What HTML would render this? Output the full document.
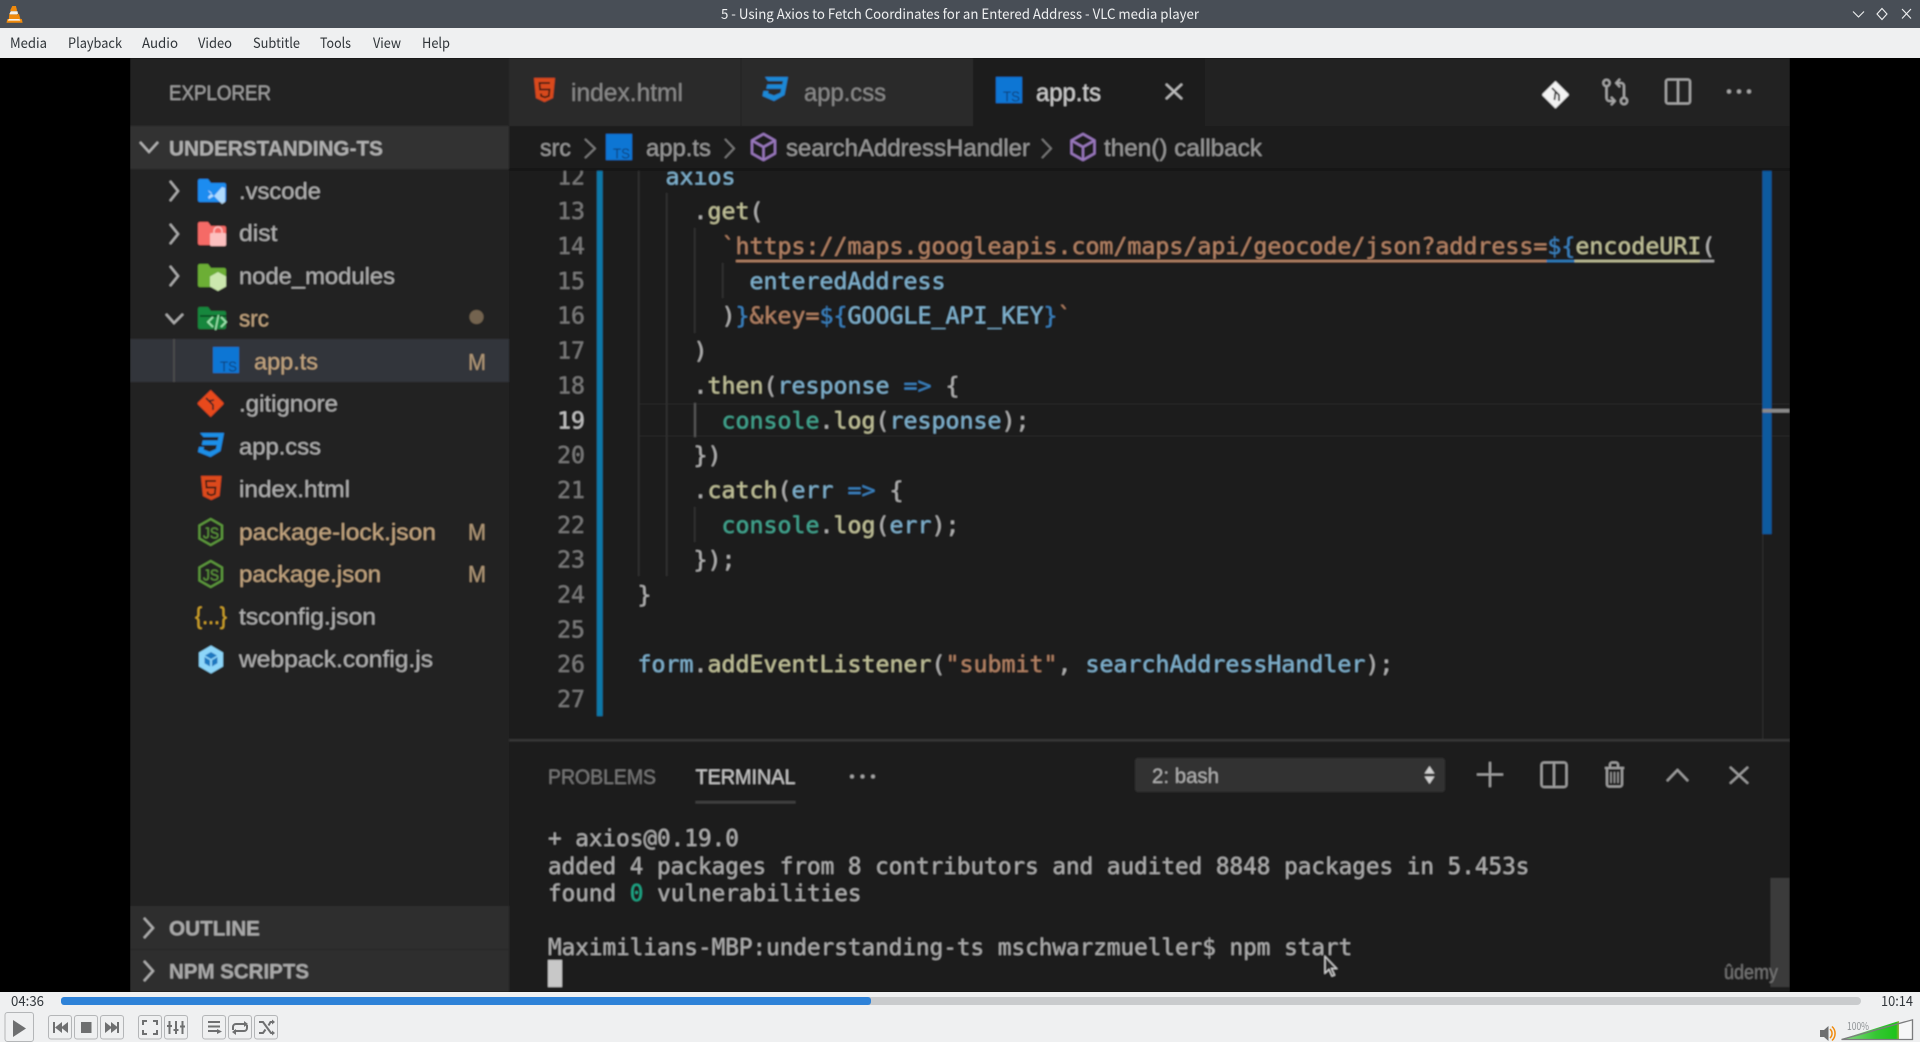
<!DOCTYPE html>
<html lang="en"><head><meta charset="utf-8"><title>VLC media player</title>
<style>
html,body{margin:0;padding:0;background:#000;width:1920px;height:1042px;overflow:hidden}
svg{display:block}
.s{font-family:"Liberation Sans",sans-serif}
.m{font-family:"DejaVu Sans Mono","Liberation Mono",monospace;font-size:23.25px;white-space:pre}
.t{font-family:"DejaVu Sans Mono","Liberation Mono",monospace;font-size:22.65px;fill:#afafaf;white-space:pre}
.n{font-family:"Noto Sans CJK JP","Liberation Sans",sans-serif}
.tree{font-size:23px;fill:#b0b0b0}
.mod{fill:#c4a680}
.ln{font-family:"DejaVu Sans Mono","Liberation Mono",monospace;font-size:23.2px;fill:#7a7a7a;text-anchor:end}
.v{fill:#80b2cf}.f{fill:#c2c29a}.q{fill:#b58365}.b{fill:#3a82bf}.c{fill:#42a690}.p{fill:#b2b2b2}
.btn{fill:#eff0f1;stroke:#b4b6b8;stroke-width:1}
.ic{fill:#6e6f70}
</style></head><body>
<svg width="1920" height="1042" viewBox="0 0 1920 1042" xmlns="http://www.w3.org/2000/svg">
<defs>
<filter id="bl" x="0" y="0" width="100%" height="100%"><feGaussianBlur stdDeviation="0.7"/></filter>
<linearGradient id="vol" x1="0" y1="0" x2="1" y2="0"><stop offset="0" stop-color="#8ed88a"/><stop offset=".6" stop-color="#35c733"/><stop offset=".95" stop-color="#1fc41a"/><stop offset="1" stop-color="#9fb040"/></linearGradient>
<clipPath id="volc"><path d="M1842 1039L1899 1021V1039Z"/></clipPath>
<g id="tsi"><rect x="0" y="0" width="26" height="26" fill="#0b76d4"/><text x="7" y="24.500" font-family="Liberation Sans,sans-serif" font-size="15" fill="#0a3f78" textLength="17" lengthAdjust="spacingAndGlyphs">TS</text></g>
<g id="cube" fill="none" stroke="#9a78bd" stroke-width="2.200" stroke-linejoin="round"><path d="M12.500 1L24 7.500V20.500L12.500 27L1 20.500V7.500Z"/><path d="M1 7.500L12.500 14L24 7.500M12.500 14V27"/></g>
</defs>

<rect width="1920" height="1042" fill="#000"/>

<!-- video frame -->
<g filter="url(#bl)">
<rect x="130" y="58" width="1660" height="934" fill="#1b1b1b"/>
<!-- sidebar -->
<rect x="130" y="58" width="379" height="934" fill="#232323"/>
<rect x="130" y="126" width="379" height="43" fill="#303030"/>
<rect x="130" y="339" width="379" height="43" fill="#33343a"/>
<rect x="173" y="339" width="2" height="43" fill="#4c4c4c"/>
<rect x="130" y="906" width="379" height="86" fill="#2f2f2f"/>
<rect x="130" y="949" width="379" height="1" fill="#272727"/>

<text class="s" x="169" y="100" font-size="21" fill="#a0a0a0" textLength="102" lengthAdjust="spacingAndGlyphs">EXPLORER</text>
<path d="M140 142L149 152L158 142" fill="none" stroke="#b5b5b5" stroke-width="2.200"/>
<text class="s" x="169" y="155.500" font-size="21.500" font-weight="bold" fill="#b0b0b0" textLength="214" lengthAdjust="spacingAndGlyphs">UNDERSTANDING-TS</text>

<g fill="none" stroke="#b0b0b0" stroke-width="2.200">
<path d="M170 181L178 191L170 201"/><path d="M170 224L178 234L170 244"/><path d="M170 266L178 276L170 286"/><path d="M166 314L174 323L183 314"/>
</g>
<!-- folder icons -->
<path d="M198 181a2 2 0 0 1 2-2h8l3 4h13a2 2 0 0 1 2 2v15a2 2 0 0 1-2 2h-24a2 2 0 0 1-2-2z" fill="#1a8cf0"/>
<path d="M209 192l5 4 8-9 3 1v14l-3 2-8-8-5 3-1-2 4-4-4-3z" fill="#bfe2ff" opacity=".9"/>
<path d="M198 224a2 2 0 0 1 2-2h8l3 4h13a2 2 0 0 1 2 2v15a2 2 0 0 1-2 2h-24a2 2 0 0 1-2-2z" fill="#f56a66"/>
<rect x="210" y="233" width="16" height="13" rx="1.500" fill="#fcc0bf"/><path d="M214 233v-2a4 4 0 0 1 8 0v2" fill="none" stroke="#fcc0bf" stroke-width="1.600"/>
<path d="M198 266a2 2 0 0 1 2-2h8l3 4h13a2 2 0 0 1 2 2v15a2 2 0 0 1-2 2h-24a2 2 0 0 1-2-2z" fill="#6cae34"/>
<path d="M218 272l8 4.500v10l-8 4.500-8-4.500v-10z" fill="#cbe7ae"/>
<path d="M198 309a2 2 0 0 1 2-2h8l3 4h13a2 2 0 0 1 2 2v14a2 2 0 0 1-2 2h-24a2 2 0 0 1-2-2z" fill="#15873c"/>
<path d="M200 316h26" stroke="#0c4f24" stroke-width="2"/>
<path d="M213 317l-5 5 5 5M221 317l5 5-5 5" fill="none" stroke="#9fe6b0" stroke-width="1.800"/><path d="M218.500 315l-3 15" stroke="#9fe6b0" stroke-width="1.500"/>

<text class="s tree" x="239" y="199" textLength="82" lengthAdjust="spacingAndGlyphs">.vscode</text>
<text class="s tree" x="239" y="241" textLength="38.500" lengthAdjust="spacingAndGlyphs">dist</text>
<text class="s tree" x="239" y="284" textLength="156" lengthAdjust="spacingAndGlyphs">node_modules</text>
<text class="s tree mod" x="239" y="326.500" textLength="30" lengthAdjust="spacingAndGlyphs">src</text>
<circle cx="476.500" cy="317" r="7" fill="#73644f"/>
<use href="#tsi" x="213" y="347"/>
<text class="s tree mod" x="254" y="369.500" textLength="64" lengthAdjust="spacingAndGlyphs">app.ts</text>
<text class="s tree" x="468" y="370" style="fill:#b39a78" textLength="18" lengthAdjust="spacingAndGlyphs">M</text>

<!-- gitignore -->
<path d="M210.700 390l12.500 12.500a1.500 1.500 0 0 1 0 2L210.700 417 198 404.500a1.500 1.500 0 0 1 0-2z" fill="#e8491c"/>
<path d="M206 398l7 7v5M209 401l5-1v0" fill="none" stroke="#232323" stroke-width="1.600"/>
<text class="s tree" x="239" y="411.500" textLength="99" lengthAdjust="spacingAndGlyphs">.gitignore</text>
<!-- css -->
<path d="M200 433h24l-3.500 18-10 6-12.500-5 1-5h5l-.5 2.500 6 2.200 6.500-2.700.8-4h-15l1-4.500h15l.7-3.500h-15z" fill="#1e8fe8"/>
<text class="s tree" x="239" y="454.500" textLength="82" lengthAdjust="spacingAndGlyphs">app.css</text>
<!-- html -->
<path d="M201 476h20.500l-2 20-8.200 4-8.300-4z" fill="#dd4a1c"/><path d="M216 481h-10l.5 6.500h9l-.7 6.500-3.500 1.200-3.500-1.200-.2-2.500" fill="none" stroke="#2a1a14" stroke-width="1.700"/>
<text class="s tree" x="239" y="497" textLength="111" lengthAdjust="spacingAndGlyphs">index.html</text>
<!-- js hex -->
<g fill="none" stroke="#5f9c3c" stroke-width="2"><path d="M210.700 519l11.300 6.500v13l-11.300 6.500-11.300-6.500v-13z"/><path d="M210.700 561l11.300 6.500v13l-11.300 6.500-11.300-6.500v-13z"/></g>
<text x="203" y="538.500" class="s" font-size="16" fill="#5f9c3c" textLength="16" lengthAdjust="spacingAndGlyphs">JS</text>
<text x="203" y="580.500" class="s" font-size="16" fill="#5f9c3c" textLength="16" lengthAdjust="spacingAndGlyphs">JS</text>
<text class="s tree mod" x="239" y="540" textLength="197" lengthAdjust="spacingAndGlyphs">package-lock.json</text>
<text class="s tree" x="468" y="540" style="fill:#b39a78" textLength="18" lengthAdjust="spacingAndGlyphs">M</text>
<text class="s tree mod" x="239" y="582" textLength="142" lengthAdjust="spacingAndGlyphs">package.json</text>
<text class="s tree" x="468" y="582" style="fill:#b39a78" textLength="18" lengthAdjust="spacingAndGlyphs">M</text>
<!-- tsconfig -->
<text class="s" x="195" y="624" font-size="24" fill="#d6a829" textLength="32" lengthAdjust="spacingAndGlyphs">{...}</text>
<text class="s tree" x="239" y="624.500" textLength="137" lengthAdjust="spacingAndGlyphs">tsconfig.json</text>
<!-- webpack -->
<path d="M211 645.500l12 7v14l-12 7-12-7v-14z" fill="#8dd6f9"/>
<path d="M211 652l6 3.500-6 3.500-6-3.500zM204.500 657l5.500 3.200v6.300l-5.500-3.200zM217.500 657l-5.500 3.200v6.300l5.500-3.200z" fill="#1c78c0"/>
<text class="s tree" x="239" y="667" textLength="194" lengthAdjust="spacingAndGlyphs">webpack.config.js</text>

<path d="M144 918L153 928L144 938M144 961L153 971L144 981" fill="none" stroke="#b0b0b0" stroke-width="2.200"/>
<text class="s" x="169" y="935.500" font-size="21.500" font-weight="bold" fill="#aaa" textLength="91" lengthAdjust="spacingAndGlyphs">OUTLINE</text>
<text class="s" x="169" y="978.500" font-size="21.500" font-weight="bold" fill="#aaa" textLength="140" lengthAdjust="spacingAndGlyphs">NPM SCRIPTS</text>

<!-- editor -->
<rect x="509" y="58" width="1281" height="68" fill="#232323"/>
<rect x="509" y="126" width="1281" height="43" fill="#1c1c1c"/>
<rect x="509" y="169" width="1281" height="571" fill="#1b1b1b"/>
<!-- line highlight -->
<rect x="638" y="403" width="1152" height="2" fill="#242424"/><rect x="638" y="435" width="1152" height="2" fill="#242424"/>
<!-- gutter -->
<rect x="597" y="169" width="5.500" height="547" fill="#0a78a8"/>
<!-- guides -->
<g fill="#333">
<rect x="638" y="169" width="1.500" height="407"/><rect x="666" y="193" width="1.500" height="383"/>
<rect x="694" y="228" width="1.500" height="105"/><rect x="722" y="263" width="1.500" height="35"/>
<rect x="694" y="507" width="1.500" height="35"/>
</g>
<rect x="694" y="403" width="2" height="34" fill="#555"/>

<g class="ln">
<text class="ln" x="585" y="184.300">12</text><text class="ln" x="585" y="219.200">13</text><text class="ln" x="585" y="254">14</text><text class="ln" x="585" y="288.900">15</text><text class="ln" x="585" y="323.700">16</text><text class="ln" x="585" y="358.600">17</text><text class="ln" x="585" y="393.400">18</text><text class="ln" x="585" y="428.300" style="fill:#c2c2c2">19</text><text class="ln" x="585" y="463.100">20</text><text class="ln" x="585" y="498">21</text><text class="ln" x="585" y="532.800">22</text><text class="ln" x="585" y="567.700">23</text><text class="ln" x="585" y="602.500">24</text><text class="ln" x="585" y="637.400">25</text><text class="ln" x="585" y="672.200">26</text><text class="ln" x="585" y="707.100">27</text>
</g>

<text class="m v" x="665.500" y="184.300">axios</text>
<text class="m" x="693.500" y="219.200"><tspan class="p">.</tspan><tspan class="f">get</tspan><tspan class="p">(</tspan></text>
<text class="m" x="721.500" y="254"><tspan class="q">`https://maps.googleapis.com/maps/api/geocode/json?address=</tspan><tspan class="b">${</tspan><tspan class="f">encodeURI</tspan><tspan class="p">(</tspan></text>
<rect x="736" y="260" width="810.500" height="2.200" fill="#b58365"/><rect x="1546.500" y="260" width="28" height="2.200" fill="#2f7fc0"/><rect x="1574.500" y="260" width="125.500" height="2.200" fill="#c2c29a"/><rect x="1700" y="260" width="14" height="2.200" fill="#aaa"/>
<text class="m v" x="749.500" y="288.900">enteredAddress</text>
<text class="m" x="721.500" y="323.700"><tspan class="p">)</tspan><tspan class="b">}</tspan><tspan class="q">&amp;key=</tspan><tspan class="b">${</tspan><tspan class="v">GOOGLE_API_KEY</tspan><tspan class="b">}</tspan><tspan class="q">`</tspan></text>
<text class="m p" x="693.500" y="358.600">)</text>
<text class="m" x="693.500" y="393.400"><tspan class="p">.</tspan><tspan class="f">then</tspan><tspan class="p">(</tspan><tspan class="v">response</tspan> <tspan class="b">=&gt;</tspan> <tspan class="p">{</tspan></text>
<text class="m" x="721.500" y="428.300"><tspan class="c">console</tspan><tspan class="p">.</tspan><tspan class="f">log</tspan><tspan class="p">(</tspan><tspan class="v">response</tspan><tspan class="p">);</tspan></text>
<text class="m p" x="693.500" y="463.100">})</text>
<text class="m" x="693.500" y="498"><tspan class="p">.</tspan><tspan class="f">catch</tspan><tspan class="p">(</tspan><tspan class="v">err</tspan> <tspan class="b">=&gt;</tspan> <tspan class="p">{</tspan></text>
<text class="m" x="721.500" y="532.800"><tspan class="c">console</tspan><tspan class="p">.</tspan><tspan class="f">log</tspan><tspan class="p">(</tspan><tspan class="v">err</tspan><tspan class="p">);</tspan></text>
<text class="m p" x="693.500" y="567.700">});</text>
<text class="m p" x="637.500" y="602.500">}</text>
<text class="m" x="637.500" y="672.200"><tspan class="v">form</tspan><tspan class="p">.</tspan><tspan class="f">addEventListener</tspan><tspan class="p">(</tspan><tspan class="q">"submit"</tspan><tspan class="p">, </tspan><tspan class="v">searchAddressHandler</tspan><tspan class="p">);</tspan></text>

<!-- overview ruler -->
<rect x="1762" y="169" width="1.500" height="571" fill="#292929"/>
<rect x="1762.500" y="169" width="9" height="365" fill="#0a5a9e"/>
<rect x="1762.500" y="409" width="27" height="3.500" fill="#8a8a8a"/>

<!-- tabs (drawn over code) -->
<rect x="509" y="58" width="232" height="68" fill="#2a2a2a"/>
<rect x="741" y="58" width="232" height="68" fill="#2a2a2a"/>
<rect x="740.500" y="58" width="1" height="68" fill="#222"/>
<rect x="973" y="58" width="232" height="68" fill="#1c1c1c"/>
<path d="M534 78h21l-2 20-8.500 4-8.500-4z" fill="#d9481c"/><path d="M550 83h-10.500l.5 6.500h9.500l-.7 6.500-3.800 1.300-3.800-1.300-.2-2.500" fill="none" stroke="#3a1c10" stroke-width="1.800"/>
<path d="M765 77h23l-3.500 18-10.500 6-11.500-5 1-5h5l-.5 2.300 6 2.200 6.500-2.700.8-4h-15l1-4.300h15l.7-3.500h-15z" fill="#1e88d6"/>
<text class="s" x="571" y="101" font-size="25" fill="#8a8a8a" textLength="112" lengthAdjust="spacingAndGlyphs">index.html</text>
<text class="s" x="804" y="101" font-size="25" fill="#8a8a8a" textLength="82" lengthAdjust="spacingAndGlyphs">app.css</text>
<use href="#tsi" x="996" y="77"/>
<text class="s" x="1036" y="101" font-size="25" fill="#cdcdcd" textLength="65" lengthAdjust="spacingAndGlyphs">app.ts</text>
<path d="M1166 84L1182 99M1182 84L1166 99" stroke="#c0c0c0" stroke-width="2" fill="none"/>

<!-- top-right actions -->
<path d="M1555.500 81l12.800 12.800a1.500 1.500 0 0 1 0 2L1555.500 108.500 1542.700 95.800a1.500 1.500 0 0 1 0-2z" fill="#f2f2f2"/>
<path d="M1552 88l7 7v6M1555.500 92l-1 8" fill="none" stroke="#232323" stroke-width="1.800"/>
<g fill="none" stroke="#a8a8a8" stroke-width="2">
<circle cx="1606.500" cy="83" r="3.200"/><path d="M1606.500 86.500v11.500a3 3 0 0 0 3 3h5M1611 97l3.800 4-3.800 4"/>
<circle cx="1624" cy="101" r="3.200"/><path d="M1624 97.500v-11.500a3 3 0 0 0-3-3h-5M1620 79l-3.800 4 3.800 4"/>
<rect x="1666" y="79.500" width="24" height="24" rx="2"/><path d="M1678 79.500v24"/>
</g>
<g fill="#a8a8a8"><circle cx="1729" cy="91.500" r="2"/><circle cx="1739" cy="91.500" r="2"/><circle cx="1749" cy="91.500" r="2"/></g>

<!-- breadcrumbs -->
<rect x="509" y="126" width="1281" height="43" fill="#1c1c1c"/>
<rect x="509" y="168" width="1281" height="3" fill="#151515"/>
<text class="s" x="540" y="156" font-size="24" fill="#999" textLength="31" lengthAdjust="spacingAndGlyphs">src</text>
<path d="M585 139L595 148.500L585 158M725 139L734 148.500L725 158M1042 139L1051 148.500L1042 158" fill="none" stroke="#808080" stroke-width="1.600"/>
<use href="#tsi" x="606" y="134"/>
<text class="s" x="646" y="156" font-size="24" fill="#999" textLength="65" lengthAdjust="spacingAndGlyphs">app.ts</text>
<use href="#cube" x="751" y="133"/>
<text class="s" x="786" y="156" font-size="24" fill="#999" textLength="244" lengthAdjust="spacingAndGlyphs">searchAddressHandler</text>
<use href="#cube" x="1070.500" y="133"/>
<text class="s" x="1104" y="156" font-size="24" fill="#999" textLength="158" lengthAdjust="spacingAndGlyphs">then() callback</text>

<!-- panel -->
<rect x="509" y="739" width="1281" height="2.500" fill="#353535"/>
<text class="s" x="548" y="784" font-size="21.500" fill="#787878" textLength="108" lengthAdjust="spacingAndGlyphs">PROBLEMS</text>
<text class="s" x="695.500" y="784" font-size="21.500" fill="#c8c8c8" textLength="100" lengthAdjust="spacingAndGlyphs">TERMINAL</text>
<rect x="695.500" y="801" width="100" height="2.500" fill="#404040"/>
<g fill="#a8a8a8"><circle cx="852" cy="776.500" r="1.900"/><circle cx="862.500" cy="776.500" r="1.900"/><circle cx="873" cy="776.500" r="1.900"/></g>
<rect x="1135" y="758" width="310" height="34" rx="3" fill="#333"/>
<text class="s" x="1152" y="783" font-size="21.500" fill="#b0b0b0" textLength="67" lengthAdjust="spacingAndGlyphs">2: bash</text>
<path d="M1429.500 766l5 7.500h-10zM1429.500 784l5-7.500h-10z" fill="#d0d0d0"/>
<g fill="none" stroke="#a0a0a0" stroke-width="2">
<path d="M1477 774.500h26M1490 762v25"/>
<rect x="1541.500" y="762.500" width="25" height="24.500" rx="2.500"/><path d="M1554 762.500v24.500"/>
<path d="M1605 768h19M1610 767.500v-3a2 2 0 0 1 2-2h4a2 2 0 0 1 2 2v3M1607 768.500v16a2 2 0 0 0 2 2h11a2 2 0 0 0 2-2v-16"/>
<path d="M1611 772v11M1614.500 772v11M1618 772v11" stroke-width="1.400"/>
<path d="M1667 781L1677.500 770L1688 781"/>
<path d="M1730 767L1748 783.500M1748 767L1730 783.500"/>
</g>
<text class="t" x="548" y="846">+ axios@0.19.0</text>
<text class="t" x="548" y="874">added 4 packages from 8 contributors and audited 8848 packages in 5.453s</text>
<text class="t" x="548" y="901">found <tspan fill="#1ca988">0</tspan> vulnerabilities</text>
<text class="t" x="548" y="955">Maximilians-MBP:understanding-ts mschwarzmueller$ npm start</text>
<rect x="548" y="960" width="14" height="27" fill="#c8c8c8"/>
<rect x="1770.500" y="878" width="19" height="109" fill="#3a3a3a"/>
<text class="s" x="1724" y="979" font-size="20" fill="#777" textLength="54" lengthAdjust="spacingAndGlyphs">ûdemy</text>
<path d="M1325 956.500v16.500l4-3.500 3 6.500 2.500-1-3-6.500h5z" fill="#222" stroke="#ddd" stroke-width="1.200"/>
</g>

<!-- window chrome -->
<rect x="0" y="0" width="1920" height="28" fill="#484e56"/>
<path d="M12.300 6h3.600l1.200 4.500-1 .8h-5l-1-.8zM9.300 13.500l1 .9h7.600l1-.9 1.500 5.500h1.400l.8 3.700H6.500l.8-3.700h1.500z" fill="#f08a0c"/>
<path d="M10.700 11.300h6.800l.5 2.500-1 .6h-7l-.5-.6zM8.800 19h10.600l1 1.600H7.800z" fill="#f6f2ea"/>
<text class="n" x="721" y="19" font-size="14" fill="#eff0f1" textLength="478" lengthAdjust="spacingAndGlyphs">5 - Using Axios to Fetch Coordinates for an Entered Address - VLC media player</text>
<g fill="none" stroke="#eff0f1" stroke-width="1.100">
<path d="M1853 11.500L1858.500 17L1864 11.500"/>
<path d="M1882 8.500L1887 14L1882 19.500L1877 14Z"/>
<path d="M1902 9L1911 18.500M1911 9L1902 18.500"/>
</g>
<rect x="0" y="28" width="1920" height="30" fill="#eff0f1"/>
<g class="n" font-size="14" fill="#2f3438">
<text x="10" y="48" textLength="37" lengthAdjust="spacingAndGlyphs">Media</text>
<text x="68" y="48" textLength="54" lengthAdjust="spacingAndGlyphs">Playback</text>
<text x="142" y="48" textLength="36" lengthAdjust="spacingAndGlyphs">Audio</text>
<text x="198" y="48" textLength="34" lengthAdjust="spacingAndGlyphs">Video</text>
<text x="253" y="48" textLength="47" lengthAdjust="spacingAndGlyphs">Subtitle</text>
<text x="320" y="48" textLength="31" lengthAdjust="spacingAndGlyphs">Tools</text>
<text x="373" y="48" textLength="28" lengthAdjust="spacingAndGlyphs">View</text>
<text x="422" y="48" textLength="28" lengthAdjust="spacingAndGlyphs">Help</text>
</g>

<!-- controls -->
<rect x="0" y="992" width="1920" height="50" fill="#eff0f1"/>
<text class="n" x="11" y="1006" font-size="14" fill="#31363b" textLength="33" lengthAdjust="spacingAndGlyphs">04:36</text>
<rect x="61" y="997" width="1800" height="8" rx="4" fill="#c9cbcd"/>
<rect x="61" y="997" width="810" height="8" rx="3" fill="#2e82d8"/>
<text class="n" x="1881" y="1006" font-size="14" fill="#31363b" textLength="32" lengthAdjust="spacingAndGlyphs">10:14</text>

<rect class="btn" x="5" y="1012.500" width="28.500" height="29" rx="2.500"/>
<path d="M13 1020v17l13-8.500z" class="ic"/>
<rect class="btn" x="48.500" y="1015.500" width="23" height="23.500" rx="2.500"/>
<rect class="btn" x="74.500" y="1015.500" width="23" height="23.500" rx="2.500"/>
<rect class="btn" x="100.500" y="1015.500" width="23" height="23.500" rx="2.500"/>
<rect class="btn" x="138.500" y="1015.500" width="23" height="23.500" rx="2.500"/>
<rect class="btn" x="164.500" y="1015.500" width="23" height="23.500" rx="2.500"/>
<rect class="btn" x="202.500" y="1015.500" width="23" height="23.500" rx="2.500"/>
<rect class="btn" x="228.500" y="1015.500" width="23" height="23.500" rx="2.500"/>
<rect class="btn" x="254.500" y="1015.500" width="23" height="23.500" rx="2.500"/>
<path class="ic" d="M53 1022h2v11h-2zM55 1027.500l7-5.500v11zM61 1027.500l7-5.500v11z"/>
<rect class="ic" x="81" y="1022" width="10.500" height="11"/>
<path class="ic" d="M105 1022l7 5.500-7 5.500zM111 1022l7 5.500-7 5.500zM117 1022h2v11h-2z"/>
<g fill="none" stroke="#6e6f70" stroke-width="2">
<path d="M143 1025v-4h4M153 1021h4v4M157 1030v4h-4M147 1034h-4v-4"/>
<path d="M169.500 1021v13M176 1021v13M182.500 1021v13"/>
<path d="M208 1022h12M208 1026.500h12M208 1031h9"/>
<path d="M233 1030v-3a3 3 0 0 1 3-3h10M247 1025v3a3 3 0 0 1-3 3h-10"/>
<path d="M259 1022l4 0 8 11h2M259 1033h4l2.500-3.500M268.500 1025.500l2-3.500h2.500"/>
</g>
<path class="ic" d="M167 1025h5v2h-5zM173.500 1029h5v2h-5zM180 1025.500h5v2h-5zM217 1034v-5l5 2.500z"/>
<path class="ic" d="M244 1021l4 3-4 3zM236 1029l-4 3 4 3zM272 1019.500l3 2.500-3 2.500zM272 1030.500l3 2.500-3 2.500z"/>

<path class="ic" d="M1820 1030h4l4.500-4v15l-4.500-4h-4z"/>
<path d="M1830 1029a6 6 0 0 1 0 9M1832 1026.500a9.500 9.500 0 0 1 0 14" fill="none" stroke="#f08a0c" stroke-width="1.500"/>
<text class="n" x="1847" y="1030" font-size="11" fill="#8f9396" textLength="22" lengthAdjust="spacingAndGlyphs">100%</text>
<path d="M1841 1039.500L1913 1019.500V1039.500Z" fill="#f6f7f7"/>
<rect x="1841" y="1019" width="58" height="21" fill="url(#vol)" clip-path="url(#volc)"/>
<path d="M1841.500 1039.500L1912.500 1019.800V1039.500Z" fill="none" stroke="#7b7c7d" stroke-width="1.300"/>
</svg>
</body></html>
